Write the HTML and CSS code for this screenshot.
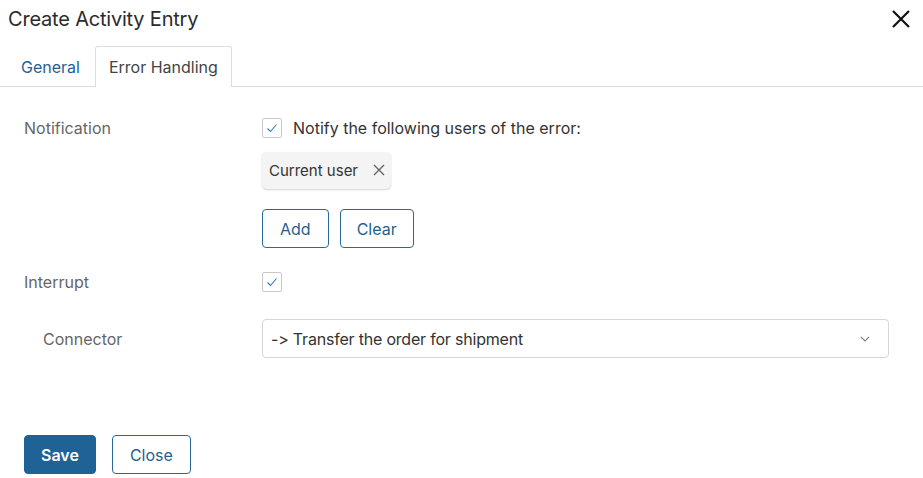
FILE: index.html
```html
<!DOCTYPE html>
<html>
<head>
<meta charset="utf-8">
<link rel="stylesheet" href="styles.css">
</head>
<body>
<div class="dialog">
  <div class="header">
    <h1 class="title">Create Activity Entry</h1>
    <button class="close-x" aria-label="Close">
      <svg width="20" height="20" viewBox="0 0 20 20"><path d="M2 2L18 18M18 2L2 18" stroke="#111" stroke-width="2.2" fill="none"/></svg>
    </button>
  </div>
  <div class="tabs">
    <div class="tab">General</div>
    <div class="tab active">Error Handling</div>
  </div>
  <div class="content">
    <div class="row">
      <div class="label">Notification</div>
      <div class="field">
        <label class="check-line">
          <span class="checkbox"><svg width="14" height="14" viewBox="0 0 14 14"><path d="M2.5 7.5L5.5 10.5L11.5 3.5" stroke="#3b78b5" stroke-width="1.1" fill="none"/></svg></span>
          <span>Notify the following users of the error:</span>
        </label>
        <div class="chip">Current user
          <svg class="chip-x" width="12" height="12" viewBox="0 0 12 12"><path d="M1 1L11 11M11 1L1 11" stroke="#666" stroke-width="1.4" fill="none"/></svg>
        </div>
        <div class="btns">
          <button class="btn">Add</button>
          <button class="btn">Clear</button>
        </div>
      </div>
    </div>
    <div class="row row-interrupt">
      <div class="label">Interrupt</div>
      <div class="field">
        <span class="checkbox"><svg width="14" height="14" viewBox="0 0 14 14"><path d="M2.5 7.5L5.5 10.5L11.5 3.5" stroke="#3b78b5" stroke-width="1.1" fill="none"/></svg></span>
      </div>
    </div>
    <div class="row row-connector">
      <div class="label sub">Connector</div>
      <div class="select">
        <span class="select-text">-&gt; Transfer the order for shipment</span>
        <svg width="10" height="6" viewBox="0 0 10 6"><path d="M1 1L5 5L9 1" stroke="#888" stroke-width="1.2" fill="none"/></svg>
      </div>
    </div>
    <div class="footer">
      <button class="btn primary">Save</button>
      <button class="btn">Close</button>
    </div>
  </div>
</div>
</body>
</html>
```
FILE: styles.css
```css
* { box-sizing: border-box; }
html, body { margin: 0; padding: 0; background: #fff; }
body { font-family: Inter, "Noto Sans", sans-serif; font-size: 16px; color: #333; font-feature-settings: "calt" 0, "liga" 0; }
.dialog { width: 923px; height: 478px; }
.header { height: 46px; display: flex; align-items: center; justify-content: space-between; padding: 0 12px 0 8px; }
.title { margin: 0; font-size: 20px; font-weight: 400; color: #2b2b2b; margin-top: -8px; letter-spacing: -0.2px; }
.close-x { background: none; border: 0; padding: 0; margin-top: -8px; width: 20px; height: 20px; cursor: pointer; }
.tabs { height: 41px; border-bottom: 1px solid #dcdde3; display: flex; align-items: flex-end; padding-left: 8px; gap: 2px; }
.tab { height: 41px; padding: 0 12px; display: flex; align-items: center; color: #1f6196; margin-bottom: -1px; border: 1px solid transparent; border-bottom: 0; border-radius: 3px 3px 0 0; }
.tab.active { color: #444; border-color: #dcdde3; background: #fff; height: 41px; padding: 0 13px 0 13px; }
.content { padding: 30px 34px 0 24px; }
.row { display: grid; grid-template-columns: 238px 1fr; }
.label { color: #666; line-height: 22px; }
.label.sub { padding-left: 19px; }
.field { display: flex; flex-direction: column; align-items: flex-start; }
.check-line { display: flex; align-items: center; height: 22px; gap: 11px; color: #333; }
.checkbox { width: 20px; height: 20px; border: 1px solid #c9c9c9; border-radius: 2px; display: inline-flex; align-items: center; justify-content: center; background: #fff; }
.chip { margin-top: 13px; height: 37px; padding: 0 6px 0 7px; display: flex; align-items: center; gap: 15px; background: #f4f4f4; border-radius: 5px; box-shadow: 0 1px 2px rgba(0,0,0,0.18); color: #333; font-size: 15px; }
.chip-x { margin-top: -1px; }
.btns { margin-top: 20px; display: flex; gap: 11px; }
.btn { font-family: Inter, "Noto Sans", sans-serif; font-size: 16px; height: 39px; padding: 0 17px; background: #fff; color: #1f5f93; border: 1px solid #2a6898; border-radius: 4px; cursor: pointer; }
.btns .btn:last-child { padding: 0 16px; }
.btn.primary { background: #1f6396; color: #fff; border-color: #1f6396; font-weight: 600; padding: 0 16px; }
.row-interrupt { margin-top: 23px; }
.row-interrupt .field { height: 22px; justify-content: center; }
.row-connector { margin-top: 26px; align-items: center; }
.select { height: 39px; border: 1px solid #d6d6d6; border-radius: 4px; display: flex; align-items: center; justify-content: space-between; padding: 0 18px 0 8px; color: #333; }
.select-text { letter-spacing: -0.2px; }
.footer { margin-top: 77px; display: flex; gap: 16px; }
.footer .btn:not(.primary) { padding: 0 17px; }
```
